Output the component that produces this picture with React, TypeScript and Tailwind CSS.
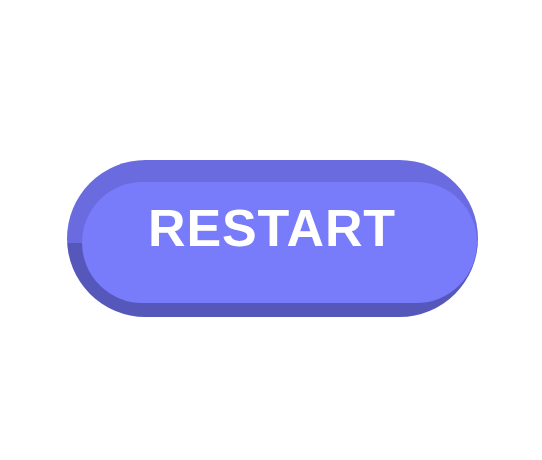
export default function App() {
  return (
    <div className="flex h-[460px] w-[542px] items-start bg-white pl-[67px] pt-[160px]">
      <button
        type="button"
        className="flex h-[157px] w-[411px] rounded-full bg-[linear-gradient(to_bottom,#6a6bde_53%,#5557bb_53%)] pb-[14px] pl-[15px] pr-[1px] pt-[22px]"
      >
        <div className="flex flex-1 justify-center rounded-full bg-[#787bfa] pr-[15px] pt-[20px]">
          <span className="font-['Liberation_Sans',Arial,sans-serif] text-[52px] font-bold leading-[52px] tracking-[0.9px] text-white">
            RESTART
          </span>
        </div>
      </button>
    </div>
  );
}
